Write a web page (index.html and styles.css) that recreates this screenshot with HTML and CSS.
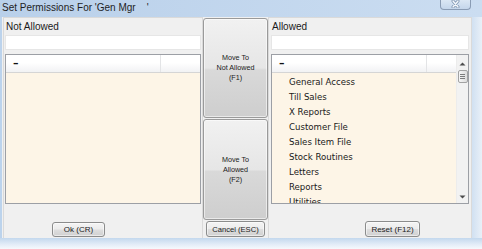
FILE: index.html
```html
<!doctype html>
<html>
  <head>
    <title>Set Permissions</title>
    <meta http-equiv="Content-Type" content="text/html; charset=utf-8" />
    <link rel="stylesheet" href="styles.css">
  </head>
  <body>
    <div class="window">
      <div class="titlebar">
        <span class="title">Set Permissions For 'Gen Mgr&nbsp;&nbsp;&nbsp;&nbsp;'</span>
        <div class="close">
          <svg width="11" height="8" viewBox="0 0 11 8">
            <path d="M3 1 L8 7 M8 1 L3 7" stroke="#8297b2" stroke-width="3" stroke-linecap="round" />
            <path d="M3 1 L8 7 M8 1 L3 7" stroke="#f4f8fc" stroke-width="1.4" stroke-linecap="round" />
          </svg>
        </div>
      </div>
      <div class="client">
        <div class="side side-left">
          <div class="label">Not Allowed</div>
          <div class="search"></div>
          <div class="list">
            <div class="list-main">
              <div class="list-head">
                <span class="head-col">&ndash;</span>
                <span class="head-rest"></span>
              </div>
              <div class="rows"></div>
            </div>
          </div>
          <div class="foot foot-left">
            <button class="btn btn-small">Ok (CR)</button>
          </div>
        </div>
        <div class="middle">
          <button class="btn btn-big">Move To<br />Not Allowed<br />(F1)</button>
          <button class="btn btn-big btn-big2">Move To<br />Allowed<br />(F2)</button>
          <button class="btn btn-small btn-cancel">Cancel (ESC)</button>
        </div>
        <div class="side side-right">
          <div class="label">Allowed</div>
          <div class="search"></div>
          <div class="list">
            <div class="list-main">
              <div class="list-head">
                <span class="head-col">&ndash;</span>
                <span class="head-rest"></span>
              </div>
              <div class="rows">
                <div class="row">General Access</div>
                <div class="row">Till Sales</div>
                <div class="row">X Reports</div>
                <div class="row">Customer File</div>
                <div class="row">Sales Item File</div>
                <div class="row">Stock Routines</div>
                <div class="row">Letters</div>
                <div class="row">Reports</div>
                <div class="row">Utilities</div>
              </div>
            </div>
            <div class="scrollbar">
              <svg class="arrow" width="7" height="4" viewBox="0 0 7 4">
                <path d="M0.5 3.5 L3.5 0.5 L6.5 3.5 Z" fill="#4d4d4d" />
              </svg>
              <div class="thumb">
                <span></span><span></span><span></span>
              </div>
              <div class="track"></div>
              <svg class="arrow" width="7" height="4" viewBox="0 0 7 4">
                <path d="M0.5 0.5 L3.5 3.5 L6.5 0.5 Z" fill="#4d4d4d" />
              </svg>
            </div>
          </div>
          <div class="foot foot-right">
            <button class="btn btn-small btn-reset">Reset (F12)</button>
          </div>
        </div>
      </div>
      <div class="bottom-edge"></div>
    </div>
  </body>
</html>
```

FILE: styles.css
```css
* {
  box-sizing: border-box;
  margin: 0px;
  padding: 0px;
}
body {
  width: 482px;
  height: 249px;
  overflow: hidden;
  background-color: #ffffff;
  font-family: "Liberation Sans", Arial, sans-serif;
}
.window {
  width: 482px;
  height: 249px;
  display: flex;
  flex-direction: column;
  background: linear-gradient(to right, #bcd3ec 0%, #c6daef 97%, #e9f0f8 100%);
}
.titlebar {
  height: 17px;
  display: flex;
  align-items: flex-start;
  background: linear-gradient(to right, #b9d0ea, #cbddf1);
}
.title {
  padding-left: 2px;
  font-size: 10px;
  line-height: 16px;
  color: #1e1e1e;
  white-space: nowrap;
}
.close {
  margin-left: auto;
  margin-right: 11px;
  width: 31px;
  height: 10px;
  border: 1px solid #8a9cb4;
  border-top: none;
  border-radius: 0 0 4px 4px;
  background: linear-gradient(#dbe7f4, #c4d6eb);
  display: flex;
  justify-content: center;
  align-items: flex-start;
}
.client {
  height: 221px;
  margin-left: 2px;
  margin-right: 10px;
  padding-left: 1px;
  display: flex;
  background-color: #f0f0f0;
}
.bottom-edge {
  flex: 1;
  background: linear-gradient(#c3d8ee, #e4edf8 60%, #f6f9fd);
}
.side {
  display: flex;
  flex-direction: column;
  border: 1px solid #dadada;
  border-bottom: none;
}
.side-left {
  width: 200px;
  padding: 0 1px;
}
.side-right {
  width: 204px;
  padding: 0 2px;
}
.label {
  height: 17px;
  line-height: 18px;
  font-size: 10px;
  color: #1a1a1a;
  padding-left: 1px;
}
.search {
  height: 15px;
  background-color: #ffffff;
  border: 1px solid #e6e6e6;
  margin-bottom: 4px;
}
.list {
  height: 150px;
  display: flex;
  border: 1px solid #9c9fa5;
  background-color: #fdf5e7;
}
.list-main {
  flex: 1;
  display: flex;
  flex-direction: column;
  overflow: hidden;
}
.list-head {
  height: 18px;
  display: flex;
  background: linear-gradient(#ffffff, #ffffff 45%, #f1f2f4);
  border-bottom: 1px solid #d5d5d5;
}
.head-col {
  width: 155px;
  border-right: 1px solid #e3e4e6;
  padding-left: 7px;
  font-family: "DejaVu Sans", sans-serif;
  font-weight: bold;
  font-size: 11px;
  line-height: 17px;
  color: #111;
}
.head-rest {
  flex: 1;
}
.rows {
  flex: 1;
  overflow: hidden;
  padding-top: 2px;
}
.row {
  height: 15px;
  line-height: 15px;
  padding-left: 17px;
  font-family: "DejaVu Sans", sans-serif;
  font-size: 8.6px;
  color: #1a1a1a;
  white-space: nowrap;
}
.scrollbar {
  width: 12px;
  display: flex;
  flex-direction: column;
  align-items: center;
  background-color: #f2f2f2;
  border-left: 1px solid #ececec;
  padding-top: 7px;
  padding-bottom: 4px;
}
.thumb {
  width: 10px;
  height: 13px;
  margin-top: 4px;
  border: 1px solid #a2a2a2;
  border-radius: 2px;
  background: linear-gradient(to right, #f6f6f6, #dcdcdc);
  display: flex;
  flex-direction: column;
  justify-content: center;
  align-items: center;
  gap: 1px;
}
.thumb span {
  width: 5px;
  height: 1px;
  background-color: #7c7c7c;
}
.track {
  flex: 1;
}
.foot {
  flex: 1;
  display: flex;
  align-items: flex-start;
}
.btn {
  font-family: "Liberation Sans", Arial, sans-serif;
  color: #1a1a1a;
  border: 1px solid #8b8c8c;
  border-radius: 3px;
  background: linear-gradient(#f4f4f4, #ececec 48%, #dedede 52%, #d0d0d0);
  box-shadow: inset 0 0 0 1px rgba(255, 255, 255, 0.55);
}
.btn-small {
  height: 15px;
  font-size: 8px;
  line-height: 13px;
}
.foot-left .btn-small {
  width: 53px;
  margin-top: 18px;
  margin-left: 47px;
}
.btn-reset {
  width: 55px;
  margin-top: 17px;
  margin-left: 94px;
  height: 16px;
}
.middle {
  width: 65px;
  display: flex;
  flex-direction: column;
  padding-top: 1px;
}
.btn-big {
  width: 65px;
  height: 100px;
  font-size: 7.2px;
  line-height: 10px;
  background: linear-gradient(#f1f1f1, #e6e6e6 50%, #d9d9d9 52%, #cecece);
  border-color: #9a9a9a;
}
.btn-big2 {
  margin-top: 1px;
  height: 101px;
}
.btn-cancel {
  width: 59px;
  height: 16px;
  margin-top: 1px;
  margin-left: 3px;
  font-size: 7.6px;
}
```
